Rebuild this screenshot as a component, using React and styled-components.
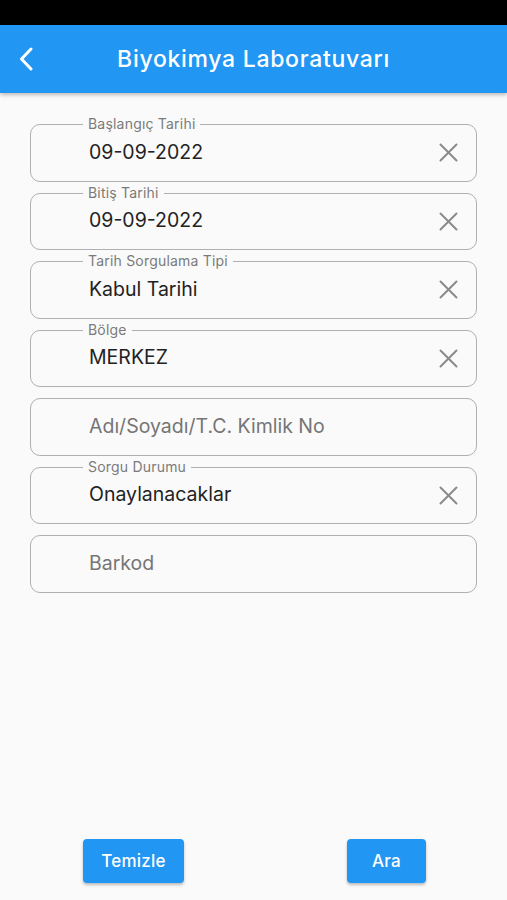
import React from "react";
import styled, { createGlobalStyle } from "styled-components";

const Global = createGlobalStyle`
  html, body { margin: 0; padding: 0; background: #fafafa; }
  body { font-family: Inter, "Noto Sans", "Liberation Sans", sans-serif; }
  * { box-sizing: border-box; }
`;

const Screen = styled.div`
  width: 507px;
  height: 900px;
  display: flex;
  flex-direction: column;
  background: #fafafa;
  overflow: hidden;
`;

const StatusBar = styled.div`
  height: 25px;
  background: #000;
  flex: none;
`;

const AppBar = styled.header`
  height: 68px;
  flex: none;
  background: #2196f3;
  display: flex;
  align-items: center;
  position: relative;
  box-shadow: 0 2px 4px rgba(0, 0, 0, 0.25);
  z-index: 1;
`;

const BackButton = styled.button`
  border: 0;
  background: transparent;
  padding: 0 0 0 18px;
  width: 60px;
  height: 100%;
  display: flex;
  align-items: center;
  cursor: pointer;
`;

const Title = styled.h1`
  flex: 1;
  margin: 0 60px 0 0;
  text-align: center;
  color: #fff;
  font-size: 23px;
  font-weight: 500;
  letter-spacing: 0.7px;
`;

const Form = styled.div`
  flex: 1;
  display: flex;
  flex-direction: column;
  gap: 11px;
  padding: 31px 30px 0 30px;
`;

const Field = styled.div`
  position: relative;
  height: 57.5px;
  border: 1.5px solid #b0b0b0;
  border-radius: 10px;
  display: flex;
  align-items: center;
  padding: 0 16px 0 58px;
`;

const Label = styled.span`
  position: absolute;
  top: -10px;
  left: 52px;
  padding: 0 5px;
  background: #fafafa;
  color: #7a7a7a;
  font-size: 14px;
  line-height: 18px;
  letter-spacing: 0.2px;
`;

const Value = styled.span`
  flex: 1;
  font-size: 19.5px;
  line-height: 24px;
  margin-top: -2px;
  color: ${(p) => (p.$placeholder ? "#757575" : "#222")};
  letter-spacing: 0;
`;

const Clear = styled.button`
  border: 0;
  background: transparent;
  padding: 0;
  width: 24px;
  height: 24px;
  display: flex;
  align-items: center;
  justify-content: center;
  cursor: pointer;
`;

const Actions = styled.div`
  flex: none;
  display: flex;
  justify-content: space-between;
  padding: 0 81px 17px 83px;
`;

const ActionButton = styled.button`
  height: 44px;
  width: ${(p) => p.$w}px;
  border: 0;
  border-radius: 4px;
  background: #2196f3;
  color: #fff;
  font-family: inherit;
  font-size: 17px;
  font-weight: 500;
  letter-spacing: 0.2px;
  box-shadow: 0 2px 3px rgba(0, 0, 0, 0.25);
  cursor: pointer;
`;

const XIcon = () => (
  <svg width="19" height="19" viewBox="0 0 19 19">
    <path d="M1.5 1.5 L17.5 17.5 M17.5 1.5 L1.5 17.5" stroke="#8a8a8a" strokeWidth="2" strokeLinecap="round" />
  </svg>
);

const fields = [
  { label: "Başlangıç Tarihi", value: "09-09-2022" },
  { label: "Bitiş Tarihi", value: "09-09-2022" },
  { label: "Tarih Sorgulama Tipi", value: "Kabul Tarihi" },
  { label: "Bölge", value: "MERKEZ" },
  { placeholder: "Adı/Soyadı/T.C. Kimlik No" },
  { label: "Sorgu Durumu", value: "Onaylanacaklar" },
  { placeholder: "Barkod" },
];

export default function App() {
  return (
    <Screen>
      <Global />
      <StatusBar />
      <AppBar>
        <BackButton aria-label="Geri">
          <svg width="18" height="24" viewBox="0 0 18 24">
            <path d="M13 2 L3.5 12 L13 22" fill="none" stroke="#fff" strokeWidth="3" strokeLinecap="round" strokeLinejoin="round" />
          </svg>
        </BackButton>
        <Title>Biyokimya Laboratuvarı</Title>
      </AppBar>
      <Form>
        {fields.map((f, i) => (
          <Field key={i}>
            {f.label && <Label>{f.label}</Label>}
            {f.value ? <Value>{f.value}</Value> : <Value $placeholder>{f.placeholder}</Value>}
            {f.value && (
              <Clear aria-label="Temizle">
                <XIcon />
              </Clear>
            )}
          </Field>
        ))}
      </Form>
      <Actions>
        <ActionButton $w={101}>Temizle</ActionButton>
        <ActionButton $w={79}>Ara</ActionButton>
      </Actions>
    </Screen>
  );
}
